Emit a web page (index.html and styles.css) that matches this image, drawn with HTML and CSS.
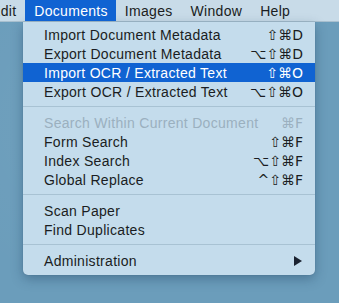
FILE: index.html
```html
<!DOCTYPE HTML>
<html>
<head>
    <title>Documents menu</title>
    <link rel="stylesheet" href="styles.css">
</head>
<body>
<nav class="menubar">
    <a href="#" class="bar_item edit">Edit</a>
    <a href="#" class="bar_item active">Documents</a>
    <a href="#" class="bar_item">Images</a>
    <a href="#" class="bar_item">Window</a>
    <a href="#" class="bar_item">Help</a>
</nav>
<div class="desktop">
    <div class="dropmenu">
        <div class="menu_item"><span>Import Document Metadata</span><span class="keys">⇧⌘D</span></div>
        <div class="menu_item"><span>Export Document Metadata</span><span class="keys">⌥⇧⌘D</span></div>
        <div class="menu_item selected"><span>Import OCR / Extracted Text</span><span class="keys">⇧⌘O</span></div>
        <div class="menu_item"><span>Export OCR / Extracted Text</span><span class="keys">⌥⇧⌘O</span></div>
        <div class="separator"></div>
        <div class="menu_item disabled"><span>Search Within Current Document</span><span class="keys">⌘F</span></div>
        <div class="menu_item"><span>Form Search</span><span class="keys">⇧⌘F</span></div>
        <div class="menu_item"><span>Index Search</span><span class="keys">⌥⇧⌘F</span></div>
        <div class="menu_item"><span>Global Replace</span><span class="keys">^⇧⌘F</span></div>
        <div class="separator"></div>
        <div class="menu_item"><span>Scan Paper</span></div>
        <div class="menu_item"><span>Find Duplicates</span></div>
        <div class="separator"></div>
        <div class="menu_item"><span>Administration</span><span class="arrow"></span></div>
    </div>
</div>
</body>
</html>
```

FILE: styles.css
```css
body {
    margin: 0;
    height: 303px;
    overflow: hidden;
    font-family: "Liberation Sans", "DejaVu Sans", sans-serif;
    font-size: 14px;
    letter-spacing: 0.3px;
    color: #1a1d22;
    background-color: #6b9dbb;
    background-image: radial-gradient(circle at 30% 40%, rgba(255, 255, 255, 0.04), transparent 60%);
}

.menubar {
    display: flex;
    height: 22px;
    background-color: #c8dbe8;
    border-bottom: 1px solid #a9c0cf;
    box-sizing: border-box;
    overflow: hidden;
}

.bar_item {
    display: block;
    height: 22px;
    line-height: 22px;
    padding: 0 9px;
    color: #1a1d22;
    text-decoration: none;
}

.edit {
    margin-left: -18px;
}

.bar_item.active {
    background-color: #1063d2;
    color: white;
    padding: 0 8px 0 9px;
}

.desktop {
    padding-left: 23px;
}

.dropmenu {
    width: 292px;
    padding: 3px 0 5px;
    background-color: #c4dcec;
    border-radius: 0 0 5px 5px;
    box-shadow: 0 4px 12px rgba(20, 50, 80, 0.35), 0 0 1px rgba(20, 50, 80, 0.4);
}

.menu_item {
    display: flex;
    justify-content: space-between;
    align-items: center;
    height: 19px;
    padding: 0 12px 0 21px;
}

.menu_item.selected {
    background-color: #1063d2;
    color: white;
}

.menu_item.disabled {
    color: #9bb0bf;
}

.keys {
    font-family: "DejaVu Sans", sans-serif;
    font-size: 14px;
    letter-spacing: 0;
}

.separator {
    height: 1px;
    margin: 5px 0 6px;
    background-color: #a8c2d3;
}

.arrow {
    width: 0;
    height: 0;
    margin-right: 1px;
    border-top: 5px solid transparent;
    border-bottom: 5px solid transparent;
    border-left: 8px solid #1a2230;
}
```
